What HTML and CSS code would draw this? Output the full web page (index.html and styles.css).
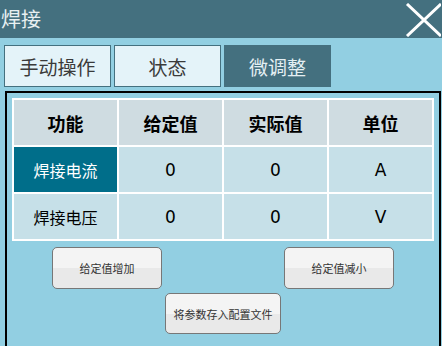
FILE: index.html
```html
<!DOCTYPE html>
<html lang="zh">
<head>
  <meta charset="UTF-8">
  <title>焊接</title>
  <link rel="stylesheet" href="styles.css">
</head>
<body>

  <div class="titlebar">
    <span class="title">焊接</span>
    <svg class="close" width="36" height="34" viewBox="0 0 36 34">
      <path d="M2 1 L36 33 M2 33 L36 1" stroke="#ffffff" stroke-width="3" fill="none"/>
    </svg>
  </div>

  <div class="tabs">
    <div class="tab">手动操作</div>
    <div class="tab">状态</div>
    <div class="tab active">微调整</div>
  </div>

  <div class="panel">
    <table class="grid">
      <tr class="head">
        <th>功能</th>
        <th>给定值</th>
        <th>实际值</th>
        <th>单位</th>
      </tr>
      <tr>
        <td class="sel">焊接电流</td>
        <td class="num">0</td>
        <td class="num">0</td>
        <td class="num">A</td>
      </tr>
      <tr>
        <td>焊接电压</td>
        <td class="num">0</td>
        <td class="num">0</td>
        <td class="num">V</td>
      </tr>
    </table>

    <div class="btn-row">
      <button class="btn">给定值增加</button>
      <button class="btn">给定值减小</button>
    </div>
    <div class="btn-row center">
      <button class="btn wide">将参数存入配置文件</button>
    </div>
  </div>

</body>
</html>
```

FILE: styles.css
```css
body {
  margin: 0;
  background: #92cfe2;
  font-family: "Noto Sans CJK SC", "Noto Sans", sans-serif;
  width: 442px;
  height: 346px;
  overflow: hidden;
}
.titlebar {
  height: 38px;
  background: #44707f;
  display: flex;
  align-items: center;
  justify-content: space-between;
}
.title {
  color: #e8f0f2;
  font-size: 20px;
  margin-left: 1px;
  line-height: 1;
}
.close {
  margin-right: 1px;
  margin-top: 2px;
}
.tabs {
  display: flex;
  gap: 3px;
  padding-left: 4px;
  margin-top: 7px;
}
.tab {
  width: 105px;
  height: 40px;
  border: 1px solid #44707f;
  background: #e4f3f9;
  color: #3a3a3a;
  font-size: 19px;
  display: flex;
  align-items: center;
  justify-content: center;
}
.tab.active {
  background: #44707f;
  color: #e4eff3;
}
.panel {
  margin: 4px 1px 0 5px;
  border: 2px solid #000;
  height: 249px;
  padding: 5px 5px 0 5px;
  box-sizing: content-box;
  width: 422px;
}
.grid {
  width: 422px;
  table-layout: fixed;
  border-collapse: separate;
  border-spacing: 2px;
  background: #ffffff;
  margin: 0;
}
.grid th, .grid td {
  height: 45px;
  padding: 0;
  text-align: center;
  background: #c6e0e8;
  color: #000;
}
.grid th {
  background: #cfdce1;
  font-size: 18px;
  font-weight: bold;
}
.grid td {
  font-size: 16px;
}
.grid td.num {
  font-family: "DejaVu Sans", sans-serif;
  font-size: 17px;
}
.grid td.sel {
  background: #006e8a;
  color: #ffffff;
}
.btn-row {
  display: flex;
  justify-content: space-between;
  padding: 0 40px;
  margin-top: 6px;
}
.btn-row.center {
  justify-content: center;
  margin-top: 4px;
}
.btn {
  width: 110px;
  height: 42px;
  border: 1px solid #777;
  border-radius: 5px;
  background: linear-gradient(#f4f4f4 50%, #e9e9e9 50%);
  font-family: "Noto Sans CJK SC", sans-serif;
  font-size: 11px;
  color: #333;
  padding: 0;
}
.btn.wide {
  width: 116px;
  height: 41px;
}
```
